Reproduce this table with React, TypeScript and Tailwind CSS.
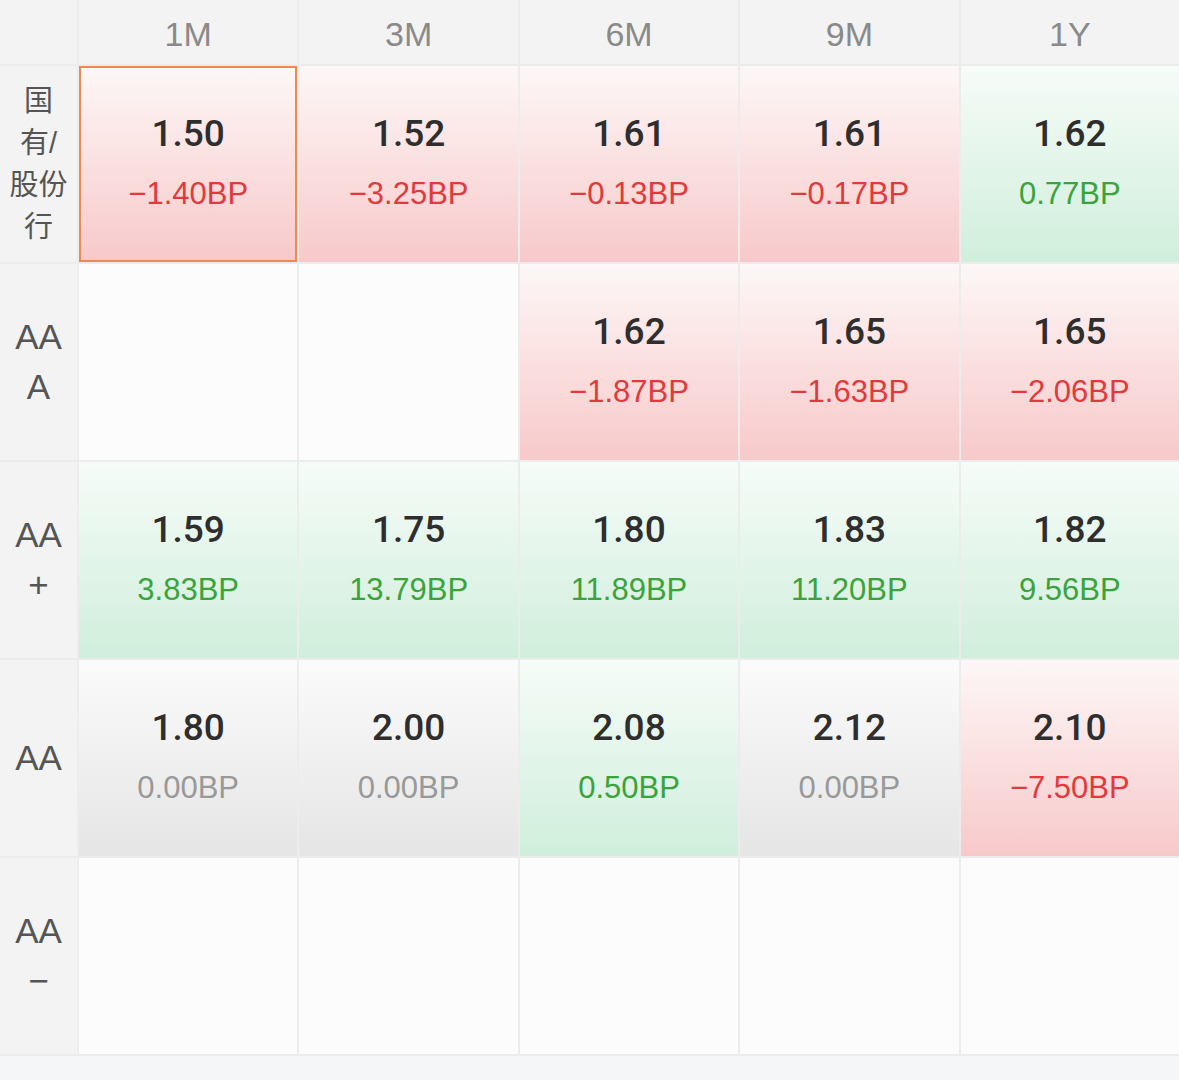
import React from "react";

type Tone = "red" | "green" | "gray" | "empty";
type Cell = { v?: string; bp?: string; tone: Tone; selected?: boolean };

const cols = ["1M", "3M", "6M", "9M", "1Y"];

const rows: { label: string[]; zh?: boolean; cells: Cell[] }[] = [
  {
    label: ["国", "有/", "股份", "行"],
    zh: true,
    cells: [
      { v: "1.50", bp: "−1.40BP", tone: "red", selected: true },
      { v: "1.52", bp: "−3.25BP", tone: "red" },
      { v: "1.61", bp: "−0.13BP", tone: "red" },
      { v: "1.61", bp: "−0.17BP", tone: "red" },
      { v: "1.62", bp: "0.77BP", tone: "green" },
    ],
  },
  {
    label: ["AA", "A"],
    cells: [
      { tone: "empty" },
      { tone: "empty" },
      { v: "1.62", bp: "−1.87BP", tone: "red" },
      { v: "1.65", bp: "−1.63BP", tone: "red" },
      { v: "1.65", bp: "−2.06BP", tone: "red" },
    ],
  },
  {
    label: ["AA", "+"],
    cells: [
      { v: "1.59", bp: "3.83BP", tone: "green" },
      { v: "1.75", bp: "13.79BP", tone: "green" },
      { v: "1.80", bp: "11.89BP", tone: "green" },
      { v: "1.83", bp: "11.20BP", tone: "green" },
      { v: "1.82", bp: "9.56BP", tone: "green" },
    ],
  },
  {
    label: ["AA"],
    cells: [
      { v: "1.80", bp: "0.00BP", tone: "gray" },
      { v: "2.00", bp: "0.00BP", tone: "gray" },
      { v: "2.08", bp: "0.50BP", tone: "green" },
      { v: "2.12", bp: "0.00BP", tone: "gray" },
      { v: "2.10", bp: "−7.50BP", tone: "red" },
    ],
  },
  {
    label: ["AA", "−"],
    cells: [
      { tone: "empty" },
      { tone: "empty" },
      { tone: "empty" },
      { tone: "empty" },
      { tone: "empty" },
    ],
  },
];

const bgClass: Record<Tone, string> = {
  red: "bg-gradient-to-b from-[#fdf7f7] to-[#f7c9ca]",
  green: "bg-gradient-to-b from-[#f6fcf8] to-[#d0eedc]",
  gray: "bg-gradient-to-b from-[#fbfbfb] to-[#e5e5e5]",
  empty: "bg-[#fcfcfc]",
};

const bpColor: Record<Tone, string> = {
  red: "text-[#e03a3c]",
  green: "text-[#3aa33c]",
  gray: "text-[#999999]",
  empty: "",
};

const font = { fontFamily: '"Liberation Sans", "Noto Sans CJK SC", sans-serif' };
const valFont = { fontFamily: 'Roboto, "Liberation Sans", sans-serif' };

export default function App() {
  return (
    <div className="w-[1179px] h-[1080px] overflow-hidden bg-[#f5f6f8]" style={font}>
      <div className="grid grid-cols-[77px_repeat(5,minmax(0,1fr))] grid-rows-[64px_repeat(5,196px)] gap-[2px] bg-[#ececec] pb-[2px] w-[1179px]">
        <div className="bg-[#f3f3f3]" />
        {cols.map((c) => (
          <div
            key={c}
            className="bg-[#f3f3f3] flex items-center justify-center pt-[4px] text-[34px] text-[#8a8a8a]"
          >
            {c}
          </div>
        ))}
        {rows.map((r, ri) => (
          <React.Fragment key={ri}>
            <div className="bg-[#f3f3f3] flex flex-col items-center justify-center text-[#555555]">
              {r.label.map((l, li) => (
                <div
                  key={li}
                  className={
                    r.zh
                      ? "text-[29px] leading-[42px]"
                      : "text-[35px] leading-[50px]"
                  }
                >
                  {l}
                </div>
              ))}
            </div>
            {r.cells.map((c, ci) => (
              <div
                key={ci}
                className={`${bgClass[c.tone]} flex flex-col items-center justify-center ${
                  c.selected ? "border-2 border-[#ec8a50]" : ""
                }`}
              >
                {c.v && (
                  <>
                    <div
                      className="h-[60px] flex items-center text-[37px] font-medium text-[#2e2e2e]"
                      style={valFont}
                    >
                      {c.v}
                    </div>
                    <div className={`h-[60px] flex items-center text-[31px] ${bpColor[c.tone]}`}>
                      {c.bp}
                    </div>
                  </>
                )}
              </div>
            ))}
          </React.Fragment>
        ))}
      </div>
    </div>
  );
}
